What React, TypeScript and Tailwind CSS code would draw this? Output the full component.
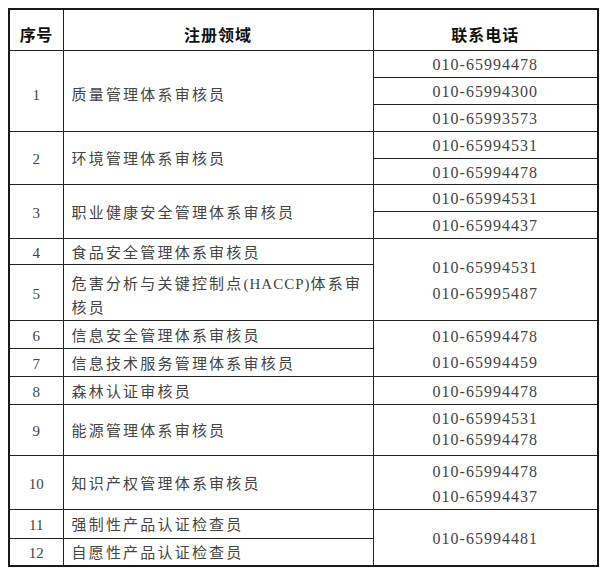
import React from "react";

const font = { fontFamily: '"Liberation Serif", "Noto Sans CJK SC", serif' };

const base = "border border-[#222] p-0 leading-[18px]";
const cell = `${base} align-middle`;
const seq = `${cell} text-center text-[15px] text-[#444]`;
const name = `${cell} text-left pl-[8px] pt-[3px] text-[15px] tracking-[2.2px] text-[#444]`;
const phone = `${cell} text-center pt-[3px] text-[16px] tracking-[1px] text-[#444]`;
const head = `${base} align-bottom pb-[5px] text-[16px] font-bold text-[#111]`;

export default function App() {
    return (
        <div className="bg-white w-[603px] h-[572px] pt-[8px] pl-[8px]" style={font}>
            <table className="table-fixed border-collapse w-[589px] border-2 border-[#1a1a1a]">
                <colgroup>
                    <col className="w-[54px]" />
                    <col className="w-[310px]" />
                    <col className="w-[225px]" />
                </colgroup>
                <tbody>
                    <tr className="h-[41px]">
                        <th className={`${head} tracking-[0.5px]`}>序号</th>
                        <th className={`${head} tracking-[1px]`}>注册领域</th>
                        <th className={`${head} tracking-[1px]`}>联系电话</th>
                    </tr>

                    <tr className="h-[27px]">
                        <td rowSpan={3} className={`${seq} pt-[8px]`}>1</td>
                        <td rowSpan={3} className={`${name} pt-[8px]`}>质量管理体系审核员</td>
                        <td className={phone}>010-65994478</td>
                    </tr>
                    <tr className="h-[27px]">
                        <td className={phone}>010-65994300</td>
                    </tr>
                    <tr className="h-[27px]">
                        <td className={phone}>010-65993573</td>
                    </tr>

                    <tr className="h-[27px]">
                        <td rowSpan={2} className={`${seq} pt-[3px]`}>2</td>
                        <td rowSpan={2} className={name}>环境管理体系审核员</td>
                        <td className={phone}>010-65994531</td>
                    </tr>
                    <tr className="h-[26px]">
                        <td className={phone}>010-65994478</td>
                    </tr>

                    <tr className="h-[27px]">
                        <td rowSpan={2} className={`${seq} pt-[3px]`}>3</td>
                        <td rowSpan={2} className={name}>职业健康安全管理体系审核员</td>
                        <td className={phone}>010-65994531</td>
                    </tr>
                    <tr className="h-[27px]">
                        <td className={phone}>010-65994437</td>
                    </tr>

                    <tr className="h-[26px]">
                        <td className={`${seq} pt-[3px]`}>4</td>
                        <td className={name}>食品安全管理体系审核员</td>
                        <td rowSpan={2} className={`${phone} leading-[26px]`}>
                            010-65994531
                            <br />
                            010-65995487
                        </td>
                    </tr>
                    <tr className="h-[55px]">
                        <td className={`${seq} pt-[3px]`}>5</td>
                        <td className={`${name} leading-[24px] pt-[7px]`}>
                            危害分析与关键控制点<span className="tracking-[1px]">(HACCP)</span>体系审
                            <br />
                            核员
                        </td>
                    </tr>

                    <tr className="h-[27px]">
                        <td className={`${seq} pt-[3px]`}>6</td>
                        <td className={name}>信息安全管理体系审核员</td>
                        <td rowSpan={2} className={`${phone} leading-[26px]`}>
                            010-65994478
                            <br />
                            010-65994459
                        </td>
                    </tr>
                    <tr className="h-[27px]">
                        <td className={`${seq} pt-[3px]`}>7</td>
                        <td className={name}>信息技术服务管理体系审核员</td>
                    </tr>

                    <tr className="h-[28px]">
                        <td className={`${seq} pt-[3px]`}>8</td>
                        <td className={name}>森林认证审核员</td>
                        <td className={phone}>010-65994478</td>
                    </tr>

                    <tr className="h-[51px]">
                        <td className={`${seq} pt-[3px]`}>9</td>
                        <td className={name}>能源管理体系审核员</td>
                        <td className={`${phone} leading-[21px] pt-0 pb-[4px]`}>
                            010-65994531
                            <br />
                            010-65994478
                        </td>
                    </tr>

                    <tr className="h-[54px]">
                        <td className={`${seq} pt-[3px]`}>10</td>
                        <td className={name}>知识产权管理体系审核员</td>
                        <td className={`${phone} leading-[25px]`}>
                            010-65994478
                            <br />
                            010-65994437
                        </td>
                    </tr>

                    <tr className="h-[29px]">
                        <td className={`${seq} pt-[3px]`}>11</td>
                        <td className={name}>强制性产品认证检查员</td>
                        <td rowSpan={2} className={phone}>010-65994481</td>
                    </tr>
                    <tr className="h-[28px]">
                        <td className={`${seq} pt-[3px]`}>12</td>
                        <td className={name}>自愿性产品认证检查员</td>
                    </tr>
                </tbody>
            </table>
        </div>
    );
}
